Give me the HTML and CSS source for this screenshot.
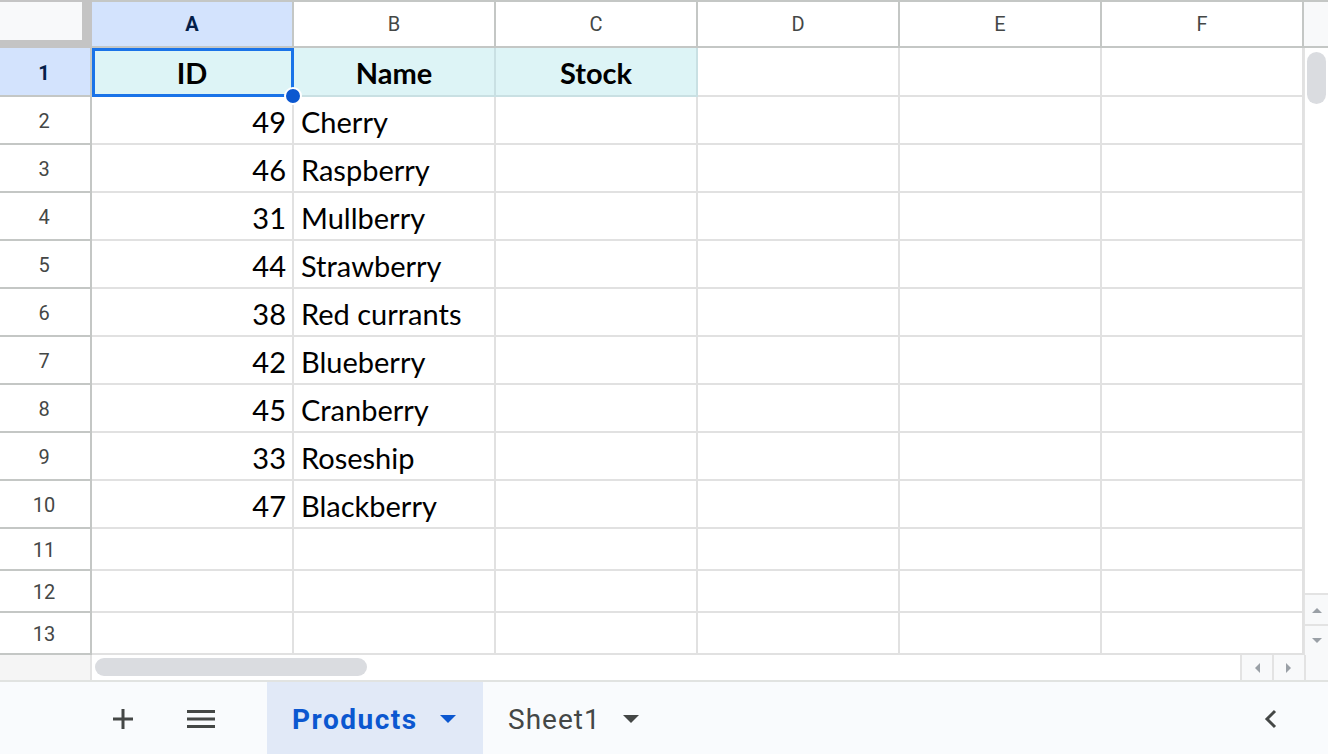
FILE: index.html
```html
<!DOCTYPE html>
<html>
<head>
<meta charset="utf-8">
<link rel="stylesheet" href="styles.css">
</head>
<body>
<div class="app">
  <div class="grid">
    <div class="corner"></div>
    <div class="colhead sel">A</div>
    <div class="colhead">B</div>
    <div class="colhead">C</div>
    <div class="colhead">D</div>
    <div class="colhead">E</div>
    <div class="colhead">F</div>
    <div class="vs-head"></div>

    <div class="vscroll">
      <div class="vs-track"><div class="vs-thumb"></div></div>
      <div class="vs-btn"><svg width="12" height="8" viewBox="0 0 12 8"><path d="M1 7 L6 2 L11 7 Z" fill="#9aa0a6"/></svg></div>
      <div class="vs-btn"><svg width="12" height="8" viewBox="0 0 12 8"><path d="M1 1 L6 6 L11 1 Z" fill="#9aa0a6"/></svg></div>
    </div>

    <div class="rowhead sel">1</div>
    <div class="cell hdr active">ID</div>
    <div class="cell hdr">Name</div>
    <div class="cell hdr">Stock</div>
    <div class="cell"></div><div class="cell"></div><div class="cell"></div>

    <div class="rowhead">2</div><div class="cell num">49</div><div class="cell">Cherry</div><div class="cell"></div><div class="cell"></div><div class="cell"></div><div class="cell"></div>
    <div class="rowhead">3</div><div class="cell num">46</div><div class="cell">Raspberry</div><div class="cell"></div><div class="cell"></div><div class="cell"></div><div class="cell"></div>
    <div class="rowhead">4</div><div class="cell num">31</div><div class="cell">Mullberry</div><div class="cell"></div><div class="cell"></div><div class="cell"></div><div class="cell"></div>
    <div class="rowhead">5</div><div class="cell num">44</div><div class="cell">Strawberry</div><div class="cell"></div><div class="cell"></div><div class="cell"></div><div class="cell"></div>
    <div class="rowhead">6</div><div class="cell num">38</div><div class="cell">Red currants</div><div class="cell"></div><div class="cell"></div><div class="cell"></div><div class="cell"></div>
    <div class="rowhead">7</div><div class="cell num">42</div><div class="cell">Blueberry</div><div class="cell"></div><div class="cell"></div><div class="cell"></div><div class="cell"></div>
    <div class="rowhead">8</div><div class="cell num">45</div><div class="cell">Cranberry</div><div class="cell"></div><div class="cell"></div><div class="cell"></div><div class="cell"></div>
    <div class="rowhead">9</div><div class="cell num">33</div><div class="cell">Roseship</div><div class="cell"></div><div class="cell"></div><div class="cell"></div><div class="cell"></div>
    <div class="rowhead">10</div><div class="cell num">47</div><div class="cell">Blackberry</div><div class="cell"></div><div class="cell"></div><div class="cell"></div><div class="cell"></div>
    <div class="rowhead">11</div><div class="cell"></div><div class="cell"></div><div class="cell"></div><div class="cell"></div><div class="cell"></div><div class="cell"></div>
    <div class="rowhead">12</div><div class="cell"></div><div class="cell"></div><div class="cell"></div><div class="cell"></div><div class="cell"></div><div class="cell"></div>
    <div class="rowhead">13</div><div class="cell"></div><div class="cell"></div><div class="cell"></div><div class="cell"></div><div class="cell"></div><div class="cell"></div>

    <div class="hs-left"></div>
    <div class="hscroll">
      <div class="hs-track"><div class="hs-thumb"></div></div>
      <div class="hs-btn"><svg width="8" height="12" viewBox="0 0 8 12"><path d="M7 1 L2 6 L7 11 Z" fill="#9aa0a6"/></svg></div>
      <div class="hs-btn"><svg width="8" height="12" viewBox="0 0 8 12"><path d="M1 1 L6 6 L1 11 Z" fill="#9aa0a6"/></svg></div>
    </div>
    <div class="hs-corner"></div>
  </div>

  <div class="bottombar">
    <div class="tool plus">
      <svg width="22" height="22" viewBox="0 0 22 22"><path d="M11 1 V21 M1 11 H21" stroke="#444746" stroke-width="3" fill="none"/></svg>
    </div>
    <div class="tool menu">
      <svg width="28" height="20" viewBox="0 0 28 20"><path d="M0 2.5 H28 M0 10 H28 M0 17.5 H28" stroke="#444746" stroke-width="3" fill="none"/></svg>
    </div>
    <div class="tab active">
      <span>Products</span>
      <svg width="16" height="8" viewBox="0 0 16 8"><path d="M0 0 H16 L8 8 Z" fill="#0b57d0"/></svg>
    </div>
    <div class="tab">
      <span>Sheet1</span>
      <svg width="16" height="8" viewBox="0 0 16 8"><path d="M0 0 H16 L8 8 Z" fill="#444746"/></svg>
    </div>
    <div class="spacer"></div>
    <div class="tool collapse">
      <svg width="14" height="20" viewBox="0 0 14 20"><path d="M12 2 L4 10 L12 18" stroke="#444746" stroke-width="3" fill="none"/></svg>
    </div>
  </div>
</div>
</body>
</html>
```

FILE: styles.css
```css
* { box-sizing: border-box; }
html, body { margin: 0; padding: 0; }
body {
  width: 1328px;
  height: 754px;
  overflow: hidden;
  background: #ffffff;
  font-family: Roboto, "Liberation Sans", Arial, sans-serif;
}
.app {
  display: flex;
  flex-direction: column;
  width: 1328px;
  height: 754px;
}
.grid {
  display: grid;
  grid-template-columns: 92px repeat(6, 202px) 24px;
  grid-template-rows: 48px 49px repeat(9, 48px) repeat(3, 42px) 25px;
  height: 680px;
}
.corner {
  background: #f8f9fa;
  border-top: 2px solid #c4c4c4;
  border-right: 10px solid #c4c4c4;
  border-bottom: 8px solid #c4c4c4;
}
.colhead {
  display: flex;
  align-items: center;
  justify-content: center;
  border-top: 2px solid #c4c7c5;
  border-right: 2px solid #c4c7c5;
  border-bottom: 2px solid #c4c7c5;
  font-size: 20px;
  color: #444746;
  background: #ffffff;
}
.colhead.sel {
  background: #d3e3fd;
  color: #041e49;
  font-weight: 700;
}
.vs-head {
  background: #f8f9fa;
  border-top: 2px solid #c4c7c5;
  border-bottom: 2px solid #c4c7c5;
}
.vscroll {
  grid-column: 8;
  grid-row: 2 / 15;
  display: flex;
  flex-direction: column;
  background: #ffffff;
  border-left: 1px solid #e3e3e3;
}
.vs-track {
  flex: 1;
  padding: 4px 2px 0 2px;
}
.vs-thumb {
  width: 19px;
  height: 52px;
  border-radius: 10px;
  background: #dadce0;
}
.vs-btn {
  height: 31px;
  display: flex;
  align-items: center;
  justify-content: center;
  background: #f8f9fa;
  border-top: 2px solid #e3e3e3;
}
.rowhead {
  display: flex;
  align-items: center;
  justify-content: center;
  font-size: 20px;
  color: #444746;
  border-right: 2px solid #c4c7c5;
  border-bottom: 2px solid #c4c7c5;
  padding-right: 2px;
  padding-top: 2px;
}
.rowhead.sel {
  background: #d3e3fd;
  color: #041e49;
  font-weight: 700;
}
.cell {
  display: flex;
  align-items: center;
  border-right: 2px solid #e1e1e1;
  border-bottom: 2px solid #e1e1e1;
  font-family: Lato, "Open Sans", sans-serif;
  font-size: 29px;
  color: #000000;
  padding: 2px 7px 0 7px;
  white-space: nowrap;
  overflow: visible;
}
.cell.num {
  justify-content: flex-end;
  padding-right: 6px;
}
.cell.hdr {
  background: #ddf4f6;
  border-right-color: #c9e0e3;
  border-bottom-color: #c9e0e3;
  justify-content: center;
  font-weight: 700;
}
.cell.active {
  position: relative;
}
.cell.active::after {
  content: "";
  position: absolute;
  left: 0;
  top: 0;
  right: -2px;
  bottom: -2px;
  border: 3px solid #1a73e8;
}
.cell.active::before {
  content: "";
  position: absolute;
  box-sizing: border-box;
  right: -10px;
  bottom: -10px;
  width: 18px;
  height: 18px;
  border-radius: 50%;
  background: #0b57d0;
  border: 2px solid #ffffff;
  z-index: 2;
}
.hs-left {
  background: #f5f5f5;
  border-right: 2px solid #e3e3e3;
}
.hscroll {
  grid-column: 2 / 8;
  display: flex;
  background: #ffffff;
}
.hs-track {
  flex: 1;
  padding: 3px 0 0 3px;
}
.hs-thumb {
  width: 272px;
  height: 18px;
  border-radius: 9px;
  background: #dadce0;
}
.hs-btn {
  width: 32px;
  display: flex;
  align-items: center;
  justify-content: center;
  background: #f8f9fa;
  border-left: 2px solid #e3e3e3;
}
.hs-corner {
  background: #f8f9fa;
  border-left: 2px solid #e3e3e3;
}
.bottombar {
  flex: 1;
  display: flex;
  align-items: stretch;
  background: #f9fbfd;
  border-top: 2px solid #e1e3e1;
  padding-left: 102px;
}
.tool {
  display: flex;
  align-items: center;
  justify-content: center;
  padding-top: 2px;
}
.tool.plus { width: 42px; }
.tool.menu { width: 38px; margin-left: 38px; }
.tab {
  display: flex;
  align-items: center;
  gap: 22px;
  padding: 2px 25px 0 25px;
  font-size: 28px;
  color: #444746;
  letter-spacing: 1px;
}
.tab.active {
  margin-left: 47px;
  width: 216px;
  background: #e1e9f7;
  color: #0b57d0;
  font-weight: 700;
  letter-spacing: 1.5px;
}
.spacer { flex: 1; }
.tool.collapse { width: 50px; margin-right: 33px; }
```
